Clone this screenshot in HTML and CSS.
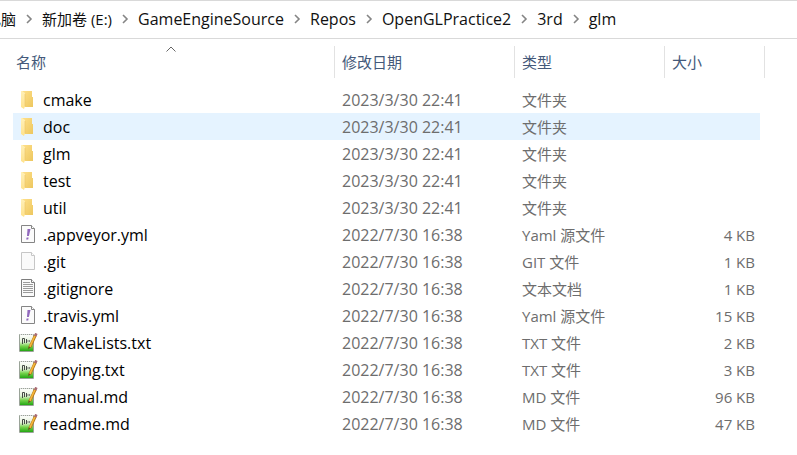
FILE: index.html
```html
<!DOCTYPE html>
<html lang="zh-CN">
<head>
<meta charset="utf-8">
<title>glm</title>
<link rel="stylesheet" href="styles.css">
</head>
<body>
<svg class="defs" aria-hidden="true">
  <defs>
    <linearGradient id="fold" x1="0" y1="0" x2="1" y2="1"><stop offset="0" stop-color="#ffe08a"/><stop offset="1" stop-color="#edc75f"/></linearGradient>
    <linearGradient id="flap" x1="0" y1="0" x2="0" y2="1"><stop offset="0" stop-color="#fff0b8"/><stop offset="1" stop-color="#ffe28c"/></linearGradient>
    <linearGradient id="green" x1="0" y1="0" x2="0" y2="1"><stop offset="0.1" stop-color="#fafcf8"/><stop offset="0.45" stop-color="#e3f1d8"/><stop offset="0.72" stop-color="#74d24a"/><stop offset="1" stop-color="#23a613"/></linearGradient>
    <symbol id="i-folder" viewBox="0 0 20 20">
      <path d="M4 1h10v6h1v10H6z" fill="url(#fold)"/>
      <path d="M3 1h1l3 2v13l-1 3-3-2z" fill="url(#flap)"/>
      <path d="M7 4v12" stroke="#eac56a" stroke-width="0.6"/>
    </symbol>
    <symbol id="i-yaml" viewBox="0 0 20 20">
      <path d="M3.5 0.5h10l3 3v14h-13z" fill="#fbfbfb" stroke="#858585"/>
      <path d="M13.5 0.5v3h3" fill="#fff" stroke="#858585"/>
      <path d="M9.500 4h3l-1.6 7H9z" fill="#9168bd"/><path d="M8.600 12.500h2l-.4 2h-2z" fill="#9168bd"/>
    </symbol>
    <symbol id="i-blank" viewBox="0 0 20 20">
      <path d="M3.5 0.5h10l3 3v14h-13z" fill="#fafafa" stroke="#c6c6c6"/>
      <path d="M13.5 0.5v3h3" fill="#fff" stroke="#c6c6c6"/>
    </symbol>
    <symbol id="i-text" viewBox="0 0 20 20">
      <path d="M3.5 0.5h10l3 3v14h-13z" fill="#fafafa" stroke="#7d7d7d"/>
      <path d="M13.5 0.5v3h3" fill="#fff" stroke="#7d7d7d"/>
      <path d="M5 3.5h7M5 5.5h10M5 7.5h10M5 9.5h10M5 11.5h10M5 13.5h10" stroke="#9b9b9b"/>
    </symbol>
    <symbol id="i-npp" viewBox="0 0 20 20">
      <path d="M1 1h14l1 1v16H1z" fill="url(#green)"/>
      <path d="M1.5 18.5V1.5h14v17z" fill="none" stroke="#9aa398"/>
      <path d="M2 1.500h13" stroke="#dedede" stroke-dasharray="1 1"/>
      <path d="M4.500 11V5.500h2V10M8.500 6v4" fill="none" stroke="#454b45"/>
      <path d="M9.500 8h3" stroke="#555" stroke-width="1.600" stroke-dasharray="1 .6"/>
      <path d="M17.500 2l-5.500 12" stroke="#b47719" stroke-width="3"/>
      <path d="M17 2.500l-5.200 11.500" stroke="#f6b73c" stroke-width="1.700"/>
      <path d="M17.200 3l1.200-2.600" stroke="#a86c75" stroke-width="2.600"/>
      <path d="M10.500 13.200l2.300 1.100-2.700 2.200z" fill="#705222"/>
    </symbol>
    <symbol id="i-chevron" viewBox="0 0 8 10"><path d="M2 1l4 4-4 4" fill="none" stroke="#858585" stroke-width="1.6"/></symbol>
  </defs>
</svg>

<nav class="path" aria-label="路径">
  <a class="crumb crumb-root" href="#">此电脑</a><svg class="chevron"><use href="#i-chevron"/></svg>
  <a class="crumb crumb-drive" href="#">新加卷 (E:)</a><svg class="chevron"><use href="#i-chevron"/></svg>
  <a class="crumb" href="#">GameEngineSource</a><svg class="chevron"><use href="#i-chevron"/></svg>
  <a class="crumb" href="#">Repos</a><svg class="chevron"><use href="#i-chevron"/></svg>
  <a class="crumb" href="#">OpenGLPractice2</a><svg class="chevron"><use href="#i-chevron"/></svg>
  <a class="crumb" href="#">3rd</a><svg class="chevron"><use href="#i-chevron"/></svg>
  <a class="crumb" href="#">glm</a>
</nav>

<main class="files">
  <table class="list">
    <colgroup><col><col class="col-date"><col class="col-type"><col class="col-size"></colgroup>
    <thead>
      <tr>
        <th class="name" aria-sort="ascending"><button type="button" class="sort">名称</button><svg class="caret" viewBox="0 0 10 6"><path d="M0.5 5.5L5 1l4.500 4.500" fill="none" stroke="#666"/></svg></th>
        <th><button type="button" class="sort">修改日期</button></th>
        <th><button type="button" class="sort">类型</button></th>
        <th><button type="button" class="sort">大小</button></th>
      </tr>
    </thead>
    <tbody>
      <tr><td><span class="file"><svg class="icon"><use href="#i-folder"/></svg>cmake</span></td><td class="date">2023/3/30 22:41</td><td>文件夹</td><td></td></tr>
      <tr class="hover"><td><span class="file"><svg class="icon"><use href="#i-folder"/></svg>doc</span></td><td class="date">2023/3/30 22:41</td><td>文件夹</td><td></td></tr>
      <tr><td><span class="file"><svg class="icon"><use href="#i-folder"/></svg>glm</span></td><td class="date">2023/3/30 22:41</td><td>文件夹</td><td></td></tr>
      <tr><td><span class="file"><svg class="icon"><use href="#i-folder"/></svg>test</span></td><td class="date">2023/3/30 22:41</td><td>文件夹</td><td></td></tr>
      <tr><td><span class="file"><svg class="icon"><use href="#i-folder"/></svg>util</span></td><td class="date">2023/3/30 22:41</td><td>文件夹</td><td></td></tr>
      <tr><td><span class="file"><svg class="icon"><use href="#i-yaml"/></svg>.appveyor.yml</span></td><td class="date">2022/7/30 16:38</td><td>Yaml 源文件</td><td>4 KB</td></tr>
      <tr><td><span class="file"><svg class="icon"><use href="#i-blank"/></svg>.git</span></td><td class="date">2022/7/30 16:38</td><td>GIT 文件</td><td>1 KB</td></tr>
      <tr><td><span class="file"><svg class="icon"><use href="#i-text"/></svg>.gitignore</span></td><td class="date">2022/7/30 16:38</td><td>文本文档</td><td>1 KB</td></tr>
      <tr><td><span class="file"><svg class="icon"><use href="#i-yaml"/></svg>.travis.yml</span></td><td class="date">2022/7/30 16:38</td><td>Yaml 源文件</td><td>15 KB</td></tr>
      <tr><td><span class="file"><svg class="icon"><use href="#i-npp"/></svg>CMakeLists.txt</span></td><td class="date">2022/7/30 16:38</td><td>TXT 文件</td><td>2 KB</td></tr>
      <tr><td><span class="file"><svg class="icon"><use href="#i-npp"/></svg>copying.txt</span></td><td class="date">2022/7/30 16:38</td><td>TXT 文件</td><td>3 KB</td></tr>
      <tr><td><span class="file"><svg class="icon"><use href="#i-npp"/></svg>manual.md</span></td><td class="date">2022/7/30 16:38</td><td>MD 文件</td><td>96 KB</td></tr>
      <tr><td><span class="file"><svg class="icon"><use href="#i-npp"/></svg>readme.md</span></td><td class="date">2022/7/30 16:38</td><td>MD 文件</td><td>47 KB</td></tr>
    </tbody>
  </table>
</main>
</body>
</html>
```
FILE: styles.css
```css
* { box-sizing: border-box; }
body {
  margin: 0;
  background: #fff;
  color: #000;
  font: 15px/20px "Open Sans", "Noto Sans CJK SC", sans-serif;
}
.defs { position: absolute; width: 0; height: 0; }

.path {
  display: flex;
  align-items: center;
  overflow: hidden;
  height: 39px;
  padding-bottom: 1px;
  border-top: 1px solid #d9d9d9;
  border-bottom: 1px solid #d9d9d9;
  white-space: nowrap;
}
.crumb { color: #111; font-size: 16px; text-decoration: none; }
.crumb-root { margin-left: -29px; font-size: 15px; }
.crumb-drive { font-size: 15px; }
.chevron { flex: none; width: 8px; height: 10px; margin: 0 9px; }

.files { padding: 7px 32px 0 13px; }
.list { width: 100%; table-layout: fixed; border-collapse: separate; border-spacing: 0; }
.col-date { width: 180px; }
.col-type { width: 150px; }
.col-size { width: 100px; }

th {
  position: relative;
  height: 32px;
  padding: 0;
  border-right: 1px solid #e2e2e2;
  text-align: left;
}
.sort {
  display: block;
  width: 100%;
  padding: 0 7px;
  border: 0;
  background: none;
  color: #44597a;
  font: inherit;
  font-weight: 400;
  text-align: left;
}
.name .sort { padding-left: 3px; }
.caret { position: absolute; top: 0; left: 153px; width: 10px; height: 6px; }

tbody::before { content: ""; display: block; height: 8px; }
td { height: 27px; padding: 0 7px; color: #6d6d6d; white-space: nowrap; }
td:first-child { padding-left: 5px; color: #000; font-size: 16px; }
.date { font-size: 16px; }
td:last-child {
  padding-right: 5px;
  border-right: 5px solid transparent;
  background-clip: padding-box;
  text-align: right;
}
.hover td { background-color: #e5f3ff; }
.file { display: flex; align-items: center; gap: 5px; }
.icon { flex: none; width: 20px; height: 20px; }
```
